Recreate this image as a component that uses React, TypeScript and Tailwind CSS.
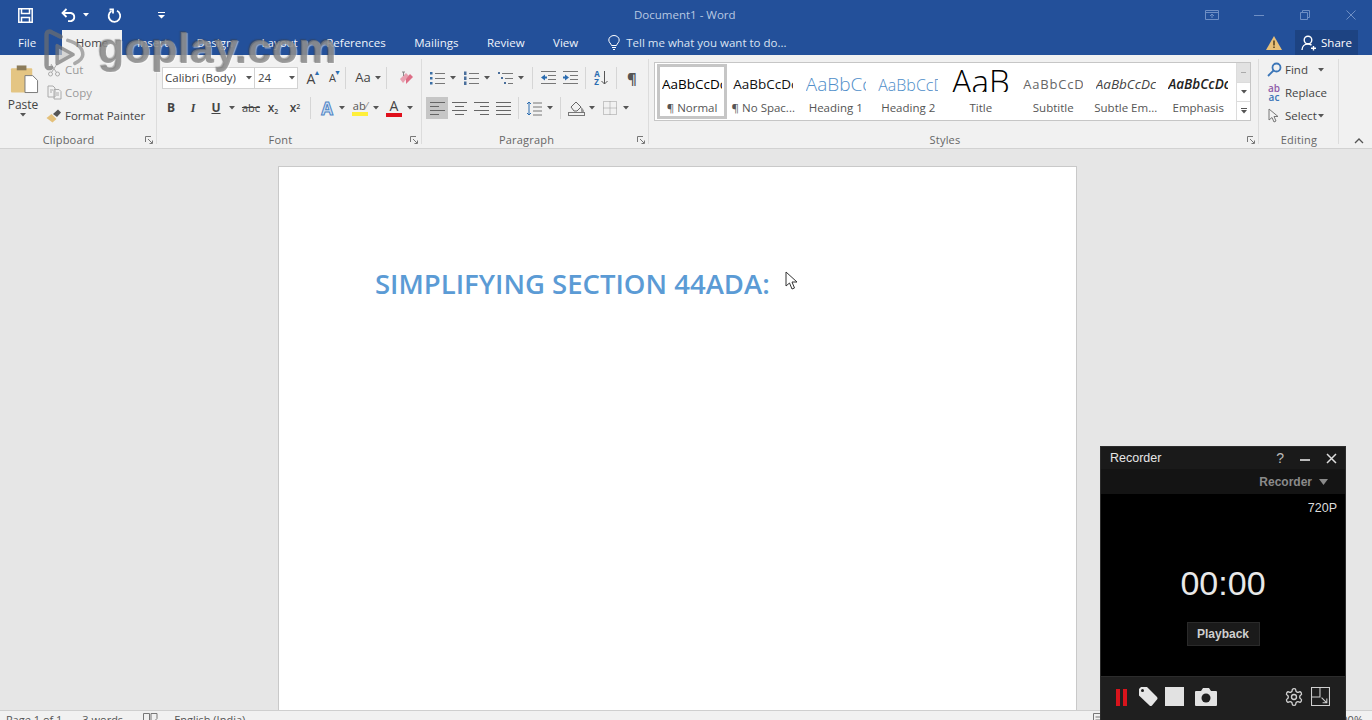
import React from "react";

const Caret = ({ w = 10, c = "#555" }: { w?: number; c?: string }) => (
  <span className="flex items-center justify-center shrink-0" style={{ width: w }}>
    <svg width="6" height="4" viewBox="0 0 6 4"><path d="M0 0h6L3 3.5z" fill={c} /></svg>
  </span>
);
const Slot = ({ children, w = 22, active = false }: { children: React.ReactNode; w?: number; active?: boolean }) => (
  <span className={`flex items-center justify-center shrink-0 h-[22px] ${active ? "bg-[#c6c6c6]" : ""}`} style={{ width: w }}>
    {children}
  </span>
);
const Sep = ({ ml, mr }: { ml: number; mr: number }) => (
  <span className="w-px h-[22px] bg-[#d6d6d6] shrink-0" style={{ marginLeft: ml, marginRight: mr }} />
);
const Launcher = () => (
  <svg width="9" height="9" viewBox="0 0 9 9" className="absolute right-[3px] bottom-[3px]">
    <path d="M.5 6V.5H6M3 3l4 4M7.500 4.500v3h-3" fill="none" stroke="#777" strokeWidth="1" />
  </svg>
);
const Group = ({ w, label, pr = 18, children }: { w: number; label: string; pr?: number; children: React.ReactNode }) => (
  <div className="relative h-full flex flex-col shrink-0" style={{ width: w }}>
    <div className="flex-1 min-h-0">{children}</div>
    <div className="h-[16px] text-center text-[11px] leading-[16px] text-[#666] tracking-[0.2px]" style={{ paddingRight: pr }}>{label}</div>
    <span className="absolute right-0 top-[4px] bottom-[4px] w-px bg-[#dcdcdc]" />
  </div>
);

const Lines = ({ kind }: { kind: "l" | "c" | "r" | "j" }) => {
  const rows = [0, 1, 2, 3];
  return (
    <svg width="15" height="13" viewBox="0 0 15 13">
      {rows.map((i) => {
        const long = i % 2 === 0;
        const w = kind === "j" || long ? 15 : 9;
        const x = kind === "c" ? (15 - w) / 2 : kind === "r" ? 15 - w : 0;
        return <rect key={i} x={x} y={i * 4} width={w} height="1" fill="#666" />;
      })}
    </svg>
  );
};
const ListIcon = ({ kind }: { kind: "b" | "n" | "m" }) => (
  <svg width="15" height="15" viewBox="0 0 15 15">
    {[2, 7, 12].map((y, i) => (
      <g key={y}>
        {kind === "b" && <rect x="0" y={y - 1} width="2.500" height="2.500" fill="#3a6ea5" />}
        {kind === "n" && <rect x="0" y={y - 1.500} width="2.500" height="3.500" fill="#4a6f9c" />}
        {kind === "m" && <rect x={i * 3} y={y - 1} width="2" height="2" fill="#4a6f9c" />}
        <rect x={kind === "m" ? 4 + i * 3 : 5} y={y} width={kind === "m" ? 11 - i * 3 : 10} height="1" fill="#777" />
      </g>
    ))}
  </svg>
);
const Indent = ({ out }: { out?: boolean }) => (
  <svg width="17" height="14" viewBox="0 0 17 14">
    {[0, 4, 8, 12].map((y) => <rect key={y} x={y === 0 || y === 12 ? 1 : 8} y={y} width={y === 0 || y === 12 ? 15 : 8} height="1" fill="#777" />)}
    <path d={out ? "M1 6.500l4-3v2h2v2H5v2z" : "M7 6.500l-4-3v2H1v2h2v2z"} fill="#2b6cb0" />
  </svg>
);

const StyleItem = ({ preview, label, selected, cls, title }: { preview: string; label: string; selected?: boolean; cls: string; title?: boolean }) => (
  <div className={`h-full shrink-0 flex flex-col items-center overflow-hidden ${selected ? "w-[70px] border-[3px] border-[#c6c6c6]" : "w-[72.500px] py-[3px]"}`}>
    <div className={`w-[60px] overflow-hidden whitespace-nowrap flex items-center ${title ? "h-[25px] mt-[3px] mb-[10px] justify-center" : "h-[38px]"} ${cls}`}>{preview}</div>
    <div className="text-[11.500px] leading-[16px] -mt-[2px] text-[#555] whitespace-nowrap">{label}</div>
  </div>
);

const RowItem = ({ icon, text, faded }: { icon: React.ReactNode; text: string; faded?: boolean }) => (
  <div className={`flex items-center h-[23px] text-[11.500px] whitespace-nowrap ${faded ? "text-[#9a9a9a]" : "text-[#444]"}`}>
    <span className="w-[16px] h-[16px] flex items-center justify-center shrink-0 mr-[3px]">{icon}</span>
    {text}
  </div>
);

const FONT = "font-['Open_Sans','Noto_Sans',sans-serif]";

export default function App() {
  return (
    <div className={`relative w-[1372px] h-[720px] overflow-hidden flex flex-col bg-[#e6e6e6] ${FONT}`}>
      {/* Title bar */}
      <div className="h-[30px] bg-[#23509a] flex items-center shrink-0 relative">
        <div className="flex items-center pl-[18px]">
          <svg width="15" height="15" viewBox="0 0 15 15" fill="none" stroke="#fff" strokeWidth="1.500">
            <path d="M.8.800h13.400v13.400H.8zM3.500 1v4.500h8V1M3.500 14V9.500h8V14" />
          </svg>
          <svg className="ml-[28px]" width="16" height="14" viewBox="0 0 16 14" fill="none" stroke="#fff" strokeWidth="1.800">
            <path d="M5.500 1L1.500 5l4 4M2 5h8a4.200 4.200 0 0 1 0 8.200H7" />
          </svg>
          <span className="ml-[6px]"><Caret w={6} c="#fff" /></span>
          <svg className="ml-[18px]" width="15" height="15" viewBox="0 0 15 15" fill="none" stroke="#fff" strokeWidth="1.800">
            <path d="M10 2.800A5.800 5.800 0 1 1 4.500 3" />
            <path d="M2.500 1.500H6V5.500" />
          </svg>
          <svg className="ml-[36px]" width="7" height="7" viewBox="0 0 7 7"><path d="M0 0h7v1H0zM0 3h7L3.500 6.500z" fill="#fff" /></svg>
        </div>
        <div className="absolute left-[634px] top-[7px] text-[11.500px] leading-[16px] text-[#b9c9e2]">Document1 - Word</div>
        <div className="ml-auto flex items-center pr-[16px] gap-[36px]">
          <svg width="14" height="10" viewBox="0 0 14 10" fill="none" stroke="#6f8fc4"><path d="M.5.500h13v9H.5zM.5 2.500h13M7 8V4M5 6l2-2 2 2" /></svg>
          <span className="w-[10px] h-px bg-[#6f8fc4] -ml-[1px]" />
          <svg width="10" height="10" viewBox="0 0 10 10" fill="none" stroke="#6f8fc4"><path d="M.5 2.500h7v7h-7zM2.500 2.500v-2h7v7h-2" /></svg>
          <svg width="10" height="10" viewBox="0 0 10 10" fill="none" stroke="#6f8fc4"><path d="M.5.500l9 9M9.500.500l-9 9" /></svg>
        </div>
      </div>

      {/* Tabs */}
      <div className="h-[25px] bg-[#23509a] flex items-stretch shrink-0 text-[11.500px] text-[#f0f4fa] relative">
        <div className="pl-[18px] w-[62px] flex items-center">File</div>
        <div className="w-[60px] bg-[#f1f1f1] text-[#444] flex items-center justify-center">Home</div>
        <div className="flex items-center gap-[28.500px] pl-[15px]">
          <span>Insert</span>
          <span>Design</span>
          <span>Layout</span>
          <span>References</span>
          <span>Mailings</span>
          <span>Review</span>
          <span>View</span>
        </div>
        <div className="flex items-center ml-[30px] text-[#dbe4f2]">
          <svg width="12" height="15" viewBox="0 0 12 15" fill="none" stroke="#fff" strokeWidth="1" className="mr-[6px]">
            <path d="M3.500 10.500C3 8.500.8 7.500.8 5a5.200 4.500 0 0 1 10.400 0c0 2.500-2.200 3.500-2.700 5.500zM4 12.500h4M5 14.500h2" />
          </svg>
          Tell me what you want to do...
        </div>
        <div className="ml-auto flex items-stretch pr-[14px]">
          <div className="flex items-center mr-[13px]">
            <svg width="16" height="14" viewBox="0 0 16 14"><path d="M8 0l8 14H0z" fill="#e8c078" /><path d="M7.200 4.500h1.600v5H7.200zM7.200 10.500h1.600v1.600H7.200z" fill="#5a4520" /></svg>
          </div>
          <div className="w-[63px] bg-[#1d4382] flex items-center justify-center text-white text-[11.500px]">
            <svg width="16" height="16" viewBox="0 0 16 16" fill="none" stroke="#fff" strokeWidth="1.400" className="mr-[4px]">
              <circle cx="7" cy="5" r="3.800" /><path d="M1 15c0-3.500 2.500-6 6-6 1.500 0 2.500.5 3.500 1M12.500 11v4.500M10 13.300h5" />
            </svg>
            Share
          </div>
        </div>
      </div>

      {/* Ribbon */}
      <div className="h-[94px] bg-[#f1f1f1] border-b border-[#d2d2d2] flex shrink-0 relative">
        <Group w={157} label="Clipboard" pr={20}>
          <div className="flex pt-[3px] h-full">
            <div className="w-[46px] flex flex-col items-center">
              <svg className="mt-[6px] ml-[3px]" width="29" height="30" viewBox="0 0 30 30">
                <rect x="1" y="4" width="22" height="25" rx="1" fill="#e4c583" />
                <rect x="7" y="1" width="10" height="5" fill="#8b7b5a" />
                <path d="M15.500 11.500h8l5 5v12.500h-13z" fill="#fff" stroke="#777" />
              </svg>
              <div className="text-[12px] leading-[16px] mt-[3px] text-[#444]">Paste</div>
              <Caret c="#555" />
            </div>
            <div className="flex flex-col">
              <RowItem faded text="Cut" icon={<svg width="14" height="14" viewBox="0 0 14 14" fill="none" stroke="#aaa"><circle cx="3.500" cy="11" r="2" /><circle cx="10.500" cy="11" r="2" /><path d="M4.500 9.500L10 1M9.500 9.500L4 1" /></svg>} />
              <RowItem faded text="Copy" icon={<svg width="15" height="15" viewBox="0 0 15 15" fill="none" stroke="#aaa"><path d="M1 1h5l2 2v9H1zM7 4.500h5l2 2V14H7z" /><path d="M3 5h3M3 7h2M9 8h3M9 10h3" /></svg>} />
              <RowItem text="Format Painter" icon={<svg width="16" height="14" viewBox="0 0 16 14"><path d="M.5 9l5-4 5 5-4 3.500z" fill="#e4c07a" /><path d="M7 5l5-4.500 3 3L11 8z" fill="#555" /></svg>} />
            </div>
          </div>
          <Launcher />
        </Group>

        <Group w={265} label="Font">
          <div className="pt-[12px] pl-[3px]">
            <div className="flex items-center h-[22px] text-[#444]">
              <span className="ml-[2px] w-[93px] h-[22px] bg-white border border-[#d2d2d2] flex items-center pl-[2px] pr-[1px] text-[11.500px] whitespace-nowrap shrink-0">Calibri (Body)<span className="ml-auto"><Caret w={8} /></span></span>
              <span className="w-[43px] h-[22px] bg-white border border-l-0 border-[#d2d2d2] flex items-center pl-[3px] pr-[1px] text-[11.500px] shrink-0">24<span className="ml-auto"><Caret w={9} /></span></span>
              <Slot w={21}><span className="text-[14px] ml-[5px] relative">A<span className="absolute -right-[5px] top-[1px] text-[7px] leading-[7px] text-[#2b6cb0]">▲</span></span></Slot>
              <Slot w={21}><span className="text-[11px] ml-[6px] relative">A<span className="absolute -right-[5px] -top-[1px] text-[7px] leading-[7px] text-[#2b6cb0]">▼</span></span></Slot>
              <Sep ml={5} mr={6} />
              <span className="text-[13px] w-[22px] text-center">Aa</span><Caret w={8} />
              <Sep ml={4} mr={9} />
              <Slot w={20}>
                <svg width="15" height="15" viewBox="0 0 15 15"><path d="M1 8l6-6 3 3-6 7z" fill="#e8a0b0" /><path d="M7 13l7-7-3-3-4 5z" fill="#dd6d85" /><path d="M3 1h3M4.500 1v4" stroke="#888" /></svg>
              </Slot>
            </div>
            <div className="flex items-center h-[22px] mt-[8px] text-[#444]">
              <Slot><b className="text-[12px] font-bold">B</b></Slot>
              <Slot><i className="text-[12px] font-['Liberation_Serif',serif] font-bold">I</i></Slot>
              <span className="w-px" />
              <Slot><span className="text-[12px] font-bold underline">U</span></Slot>
              <Caret />
              <span className="w-[3px]" />
              <Slot><span className="text-[11px] line-through">abc</span></Slot>
              <Slot><span className="text-[12px] font-semibold">x<sub className="text-[7px]">2</sub></span></Slot>
              <Slot><span className="text-[12px] font-semibold">x<sup className="text-[7px]">2</sup></span></Slot>
              <Sep ml={4} mr={5} />
              <Slot><span className="text-[17px] leading-[17px] font-bold text-[#cfe0f3] [-webkit-text-stroke:1px_#4f85c5]">A</span></Slot>
              <Caret w={8} />
              <span className="w-[3px]" />
              <Slot>
                <span className="flex flex-col items-center leading-none">
                  <span className="text-[11px] leading-[12px] text-[#555]">ab<span className="text-[#888]">⁄</span></span>
                  <span className="w-[16px] h-[4px] bg-[#ffef3a]" />
                </span>
              </Slot>
              <Caret />
              <span className="w-[2px]" />
              <Slot>
                <span className="flex flex-col items-center leading-none">
                  <span className="text-[14px] leading-[14px]">A</span>
                  <span className="w-[16px] h-[4px] bg-[#e0101c]" />
                </span>
              </Slot>
              <Caret />
            </div>
          </div>
          <Launcher />
        </Group>

        <Group w={227} label="Paragraph">
          <div className="pt-[12px] pl-[4px]">
            <div className="flex items-center h-[22px]">
              <Slot><ListIcon kind="b" /></Slot><Caret />
              <span className="w-[2px]" />
              <Slot><ListIcon kind="n" /></Slot><Caret />
              <span className="w-[2px]" />
              <Slot><ListIcon kind="m" /></Slot><Caret />
              <Sep ml={6} mr={4} />
              <Slot><Indent out /></Slot>
              <Slot><Indent /></Slot>
              <Sep ml={4} mr={4} />
              <Slot>
                <span className="relative flex flex-col text-[8px] leading-[8px] text-[#2b6cb0] font-bold pr-[8px]">A<span>Z</span>
                  <svg className="absolute right-0 top-[1px]" width="7" height="14" viewBox="0 0 7 14"><path d="M3.500 0v13M.5 10l3 3 3-3" fill="none" stroke="#555" /></svg>
                </span>
              </Slot>
              <Sep ml={4} mr={4} />
              <Slot><span className="text-[15px] font-bold text-[#555]">¶</span></Slot>
            </div>
            <div className="flex items-center h-[22px] mt-[8px]">
              <Slot active><Lines kind="l" /></Slot>
              <Slot><Lines kind="c" /></Slot>
              <Slot><Lines kind="r" /></Slot>
              <Slot><Lines kind="j" /></Slot>
              <Sep ml={4} mr={4} />
              <Slot>
                <svg width="16" height="15" viewBox="0 0 16 15"><path d="M3 1v13M1 3l2-2 2 2M1 12l2 2 2-2" fill="none" stroke="#2b6cb0" /><path d="M7 2h9M7 6h9M7 10h9M7 14h9" stroke="#777" /></svg>
              </Slot>
              <Caret />
              <Sep ml={5} mr={4} />
              <Slot>
                <svg width="17" height="16" viewBox="0 0 17 16"><path d="M3 7l5-5 5 5-4 4H6z" fill="none" stroke="#666" /><path d="M13 7c2 2 3 3 3 4a1.500 1.500 0 0 1-3 0z" fill="#999" /><rect x="0.500" y="12.500" width="16" height="3" fill="#f1f1f1" stroke="#777" /></svg>
              </Slot>
              <Caret />
              <span className="w-[2px]" />
              <Slot>
                <svg width="14" height="14" viewBox="0 0 14 14" fill="none" stroke="#999" strokeDasharray="1 1"><path d="M.5.500h13v13H.5zM7 .5v13M.5 7h13" /></svg>
              </Slot>
              <Caret />
            </div>
          </div>
          <Launcher />
        </Group>

        <Group w={610} label="Styles">
          <div className="pt-[7px] pl-[5px]">
            <div className="w-[597px] h-[59px] bg-white border border-[#c6c6c6] flex py-[1px] pl-[2px]">
              <StyleItem selected preview="AaBbCcDc" label="¶ Normal" cls="text-[13.500px] text-black" />
              <StyleItem preview="AaBbCcDc" label="¶ No Spac..." cls="text-[13.500px] text-[#111]" />
              <StyleItem preview="AaBbCc" label="Heading 1" cls="text-[19px] text-[#4f8ec9] font-light" />
              <StyleItem preview="AaBbCcD" label="Heading 2" cls="text-[16px] text-[#4f8ec9] font-light" />
              <StyleItem title preview="AaB" label="Title" cls="text-[33px] leading-[25px] text-black font-light" />
              <StyleItem preview="AaBbCcD" label="Subtitle" cls="text-[13px] text-[#666] tracking-[0.8px]" />
              <StyleItem preview="AaBbCcDc" label="Subtle Em..." cls="text-[13.500px] italic text-[#444]" />
              <StyleItem preview="AaBbCcDc" label="Emphasis" cls="text-[13.500px] italic font-semibold text-[#222]" />
              <div className="flex flex-col w-[14px] ml-auto -mt-[1px] -mb-[1px] border-l border-[#dcdcdc] divide-y divide-[#dcdcdc] shrink-0">
                <div className="h-[20px] bg-[#e2e2e2] flex items-center justify-center"><span className="w-[5px] h-px bg-[#aaa]" /></div>
                <div className="h-[19px] flex items-center justify-center"><Caret c="#555" /></div>
                <div className="flex-1 flex flex-col items-center justify-center gap-[1px]"><span className="w-[6px] h-px bg-[#555]" /><Caret c="#555" /></div>
              </div>
            </div>
          </div>
          <Launcher />
        </Group>

        <Group w={80} label="Editing" pr={0}>
          <div className="pl-[7px] pt-[3px]">
            <div className="flex items-center">
              <RowItem text="Find" icon={<svg width="15" height="15" viewBox="0 0 15 15" fill="none" stroke="#3b76b8" strokeWidth="1.800"><circle cx="9.500" cy="5.500" r="4" /><path d="M6.500 8.500L1 14" /></svg>} />
              <span className="ml-[8px]"><Caret /></span>
            </div>
            <RowItem text="Replace" icon={<span className="text-[10px] leading-[9px] font-semibold text-[#8e5aa8] text-center">ab<br /><span className="text-[#3b76b8]">ac</span></span>} />
            <div className="flex items-center">
              <RowItem text="Select" icon={<svg width="12" height="15" viewBox="0 0 12 15" fill="none" stroke="#777"><path d="M1 1v11l3-2.500 2 4.500 2-1-2-4.500h4z" /></svg>} />
              <Caret w={8} />
            </div>
          </div>
        </Group>

        <div className="flex-1 relative">
          <svg className="absolute left-[15px] bottom-[4px]" width="10" height="6" viewBox="0 0 10 6" fill="none" stroke="#555" strokeWidth="1.300"><path d="M1 5l4-4 4 4" /></svg>
        </div>
      </div>

      {/* Document area */}
      <div className="flex-1 min-h-0 flex pl-[278px] pt-[17px] overflow-hidden">
        <div className="w-[799px] h-[700px] bg-white border border-[#c9c9c9] pl-[96px] pt-[99px] shrink-0">
          <div className="text-[27.500px] leading-[36px] font-semibold text-[#5b9bd5] whitespace-nowrap">SIMPLIFYING SECTION 44ADA:</div>
        </div>
      </div>

      {/* Status bar */}
      <div className="h-[10px] bg-[#f1f1f1] border-t border-[#cfcfcf] shrink-0 overflow-hidden relative">
        <div className="flex items-center h-[18px] pl-[6px] text-[11px] text-[#555] whitespace-nowrap">
          <span>Page 1 of 1</span>
          <span className="ml-[20px]">3 words</span>
          <svg className="ml-[20px]" width="15" height="14" viewBox="0 0 15 14" fill="none" stroke="#777"><path d="M.5.500h6v9h-6zM8 .5h6v5l-3 3H8z" /></svg>
          <span className="ml-[16px]">English (India)</span>
          <svg className="ml-auto" width="12" height="14" viewBox="0 0 12 14" fill="none" stroke="#777"><path d="M.5.500h11v13H.5zM2.500 4h7M2.500 7h7M2.500 10h7" /></svg>
          <span className="ml-[230px] mr-[9px]">100%</span>
        </div>
      </div>

      {/* Mouse pointer */}
      <svg className="absolute left-[785px] top-[271px]" width="14" height="20" viewBox="0 0 14 20">
        <path d="M1 1v14l3.500-3 2.500 6 2.500-1-2.500-6H12z" fill="#fff" stroke="#333" />
      </svg>

      {/* Watermark */}
      <div className="absolute left-[43px] top-[23px] flex items-start pointer-events-none select-none blur-[0.5px]">
        <svg width="46" height="46" viewBox="0 0 52 52" fill="none" className="opacity-70 mt-[5px]">
          <path d="M4 8c0-4 3-5 6-3l10 5M4 8v34c0 3 2 4 5 3" stroke="#6e6e6e" strokeWidth="5" strokeLinecap="round" />
          <path d="M16 20v20l18-10z" fill="#c9c9c9" stroke="#777" strokeWidth="4" strokeLinejoin="round" />
          <path d="M28 14c10 3 17 8 17 16 0 5-5 8-9 10" stroke="#8a8a8a" strokeWidth="4" strokeLinecap="round" />
        </svg>
        <span className="ml-[9px] font-['Liberation_Sans',sans-serif] font-bold text-[43px] leading-[50px] tracking-[0.3px] text-[#7c7c7c]/70 [text-shadow:1px_1px_1px_rgba(255,255,255,0.5),-1px_-1px_1px_rgba(60,60,60,0.4)]">goplay.com</span>
      </div>

      {/* Recorder */}
      <div className="absolute left-[1100px] top-[446px] w-[246px] h-[280px] bg-black border border-[#2c2c2c] flex flex-col font-['Liberation_Sans',sans-serif]">
        <div className="h-[22px] bg-[#1a1a1a] flex items-center pl-[9px] pr-[8px] text-[12.500px] text-[#e6e6e6] shrink-0">
          Recorder
          <span className="ml-auto text-[14px] text-[#bbb]">?</span>
          <span className="ml-[16px] w-[10px] h-[2px] bg-[#bbb] mt-[3px]" />
          <svg className="ml-[16px]" width="11" height="11" viewBox="0 0 11 11" stroke="#ddd" strokeWidth="1.500"><path d="M1 1l9 9M10 1l-9 9" /></svg>
        </div>
        <div className="h-[25px] bg-[#141414] flex items-center justify-end pr-[17px] text-[12px] font-semibold text-[#8a8a8a] shrink-0">
          Recorder
          <svg className="ml-[7px]" width="9" height="6" viewBox="0 0 9 6"><path d="M0 0h9L4.500 6z" fill="#8a8a8a" /></svg>
        </div>
        <div className="flex-1 min-h-0 flex flex-col items-center relative">
          <div className="self-end pr-[8px] pt-[7px] text-[12.500px] leading-[14px] text-[#dcdcdc]">720P</div>
          <div className="mt-[48px] text-[34px] leading-[40px] text-[#e8e8e8]">00:00</div>
          <div className="mt-[19px] w-[73px] h-[24px] bg-[#1a1a1a] border border-[#2a2a2a] flex items-center justify-center text-[12px] font-bold text-[#cfcfcf]">Playback</div>
        </div>
        <div className="h-[49px] bg-[#1f1f1f] border-t border-[#2c2c2c] shrink-0 flex items-start pt-[10px] pl-[15px] pr-[15px]">
          <div className="flex items-center h-[20px] gap-[3px]">
            <span className="w-[4px] h-[17px] bg-[#d8141c]" />
            <span className="w-[4px] h-[17px] bg-[#d8141c]" />
          </div>
          <svg className="ml-[12px]" width="19" height="20" viewBox="0 0 19 20"><path d="M0 2l2-2h6l10 10a2 2 0 0 1 0 2.500l-5 6a2 2 0 0 1-2.500 0L0 8.500z" fill="#e6e6e6" /><circle cx="3.500" cy="3.500" r="1.500" fill="#1f1f1f" /></svg>
          <span className="ml-[7px] w-[19px] h-[19px] bg-[#e2e2e2]" />
          <svg className="ml-[11px]" width="22" height="20" viewBox="0 0 22 20"><path d="M1 4h5l2-3h6l2 3h5a1 1 0 0 1 1 1v13a1 1 0 0 1-1 1H1a1 1 0 0 1-1-1V5a1 1 0 0 1 1-1z" fill="#e2e2e2" /><circle cx="11" cy="11" r="4.500" fill="#1f1f1f" /></svg>
          <svg className="ml-auto" width="20" height="20" viewBox="0 0 24 24" fill="none" stroke="#d0d0d0" strokeWidth="1.600">
            <path d="M12.220 2h-.44a2 2 0 0 0-2 2v.18a2 2 0 0 1-1 1.730l-.43.250a2 2 0 0 1-2 0l-.150-.08a2 2 0 0 0-2.730.730l-.220.380a2 2 0 0 0 .730 2.730l.150.100a2 2 0 0 1 1 1.720v.510a2 2 0 0 1-1 1.740l-.150.090a2 2 0 0 0-.730 2.730l.220.380a2 2 0 0 0 2.730.730l.150-.08a2 2 0 0 1 2 0l.430.250a2 2 0 0 1 1 1.730V20a2 2 0 0 0 2 2h.44a2 2 0 0 0 2-2v-.18a2 2 0 0 1 1-1.730l.430-.250a2 2 0 0 1 2 0l.150.080a2 2 0 0 0 2.730-.730l.220-.390a2 2 0 0 0-.730-2.730l-.150-.080a2 2 0 0 1-1-1.740v-.500a2 2 0 0 1 1-1.740l.150-.090a2 2 0 0 0 .730-2.730l-.220-.380a2 2 0 0 0-2.730-.730l-.150.080a2 2 0 0 1-2 0l-.430-.250a2 2 0 0 1-1-1.730V4a2 2 0 0 0-2-2z" />
            <circle cx="12" cy="12" r="3" />
          </svg>
          <svg className="ml-[7px]" width="19" height="19" viewBox="0 0 18 18" fill="none" stroke="#d0d0d0"><path d="M.5.500h17v17H.5z" /><path d="M.5 9.500h8v-9" /><path d="M10 10l5 5M15 11v4h-4" /></svg>
        </div>
      </div>
    </div>
  );
}
